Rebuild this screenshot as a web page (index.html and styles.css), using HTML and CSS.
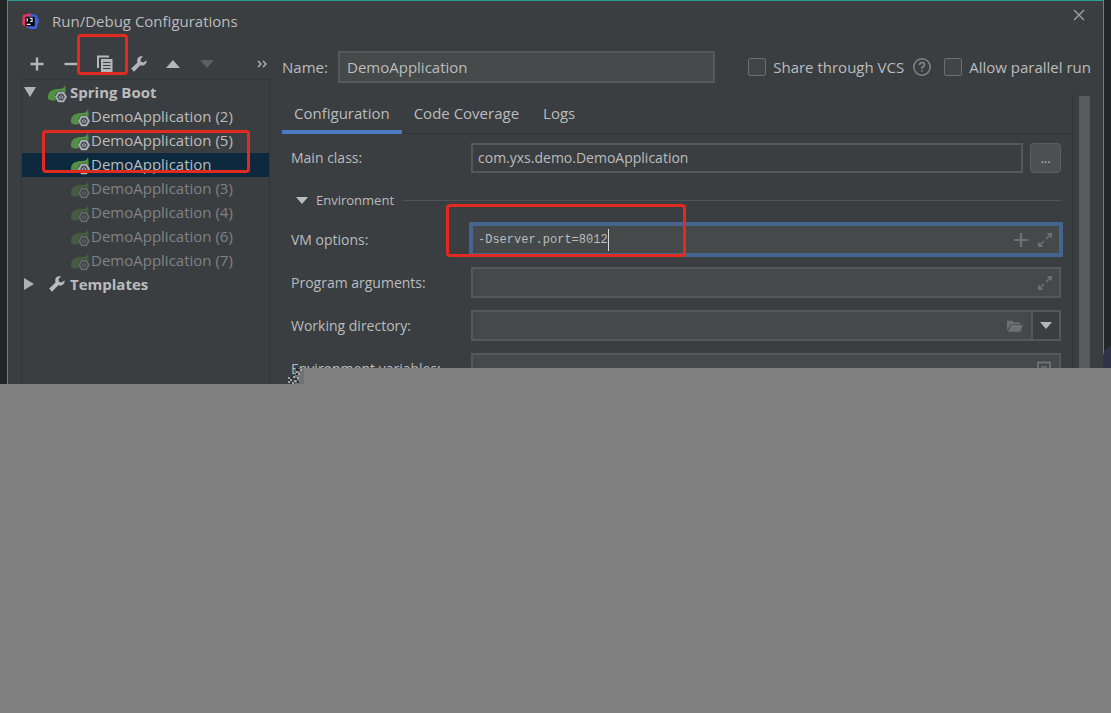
FILE: index.html
```html
<!DOCTYPE html>
<html lang="en">
<head>
<meta charset="utf-8">
<title>Run/Debug Configurations</title>
<link rel="stylesheet" href="styles.css">
</head>
<body>
<svg class="defs" aria-hidden="true">
  <symbol id="spring" viewBox="0 0 20 18">
    <path d="M0 12C0 6 5 4 10 4C14 4 16 3 17 0C18 5 18 9 16 11L10 14C7 16 4 16 0 14Z" fill="#529144"/>
    <circle cx="13" cy="12" r="6" fill="#3b3e40"/>
    <path d="M10.7 7.7H15.3L17.9 12L15.3 16.3H10.7L8.1 12Z" fill="none" stroke="#a9b2b8" stroke-width="2" stroke-linejoin="round"/>
    <path d="M13 9.5v2.5M11.3 10.8v2.4h3.4v-2.4" fill="none" stroke="#a9b2b8"/>
  </symbol>
  <symbol id="wrench" viewBox="0 0 18 18">
    <path d="M16.5 5.2L13.6 7.4L10.9 6.8L10.5 4.1L13 1.6C10.3.6 7.5 2.2 7.2 5C7.1 6 7.2 6.7 7.5 7.5L1.2 13.6L4 16.7L10.3 10.3C13.7 11.4 17.2 8.9 16.5 5.2Z" fill="currentColor"/>
  </symbol>
  <symbol id="down" viewBox="0 0 14 8"><path d="M0 0H14L7 8Z" fill="currentColor"/></symbol>
  <symbol id="expand" viewBox="0 0 16 16">
    <path d="M9.5 1H15V6.5ZM1 9.5V15H6.5Z" fill="currentColor"/>
    <path d="M12.5 3.5L9 7M7 9L3.5 12.5" stroke="currentColor" stroke-width="1.5"/>
  </symbol>
</svg>

<main class="stage">
  <section class="dialog" aria-label="Run/Debug Configurations">
    <header class="titlebar">
      <svg class="logo" viewBox="0 0 18 18" aria-hidden="true">
        <path d="M1 2L9 0L10 10L6 16L0 12Z" fill="#e8345c"/>
        <path d="M9 1L15 2L18 8L15 17L8 17L5 14Z" fill="#3f62e0"/>
        <path d="M3.5 4H13.5V14H3.5Z" fill="#0a0a12"/>
        <path d="M5.5 5.5v3.5M8 5.5h2.6v3.5h-2M5 12h4" stroke="#fff" fill="none" stroke-width="1.2"/>
      </svg>
      <h1>Run/Debug Configurations</h1>
      <button class="close" aria-label="Close"><svg viewBox="0 0 12 12"><path d="M1 1L11 11M11 1L1 11" stroke="currentColor" stroke-width="1.3"/></svg></button>
    </header>

    <div class="columns">
      <aside class="sidebar">
        <div class="toolbar">
          <button aria-label="Add"><svg viewBox="0 0 18 18"><path d="M9 2.5V15.5M2.5 9H15.5" stroke="currentColor" stroke-width="2.4"/></svg></button>
          <button aria-label="Remove"><svg viewBox="0 0 18 18"><path d="M2.5 9H15.5" stroke="currentColor" stroke-width="2.4"/></svg></button>
          <button aria-label="Copy"><svg viewBox="0 0 18 18"><path d="M2 13V1.5H13" fill="none" stroke="currentColor" stroke-width="2"/><path d="M5 4H16.5V17H5Z" fill="currentColor"/><path d="M7 7.5H14.5M7 10.5H14.5M7 13.5H14.5" stroke="#3b3e40" stroke-width="1.2"/></svg></button>
          <button aria-label="Edit templates"><svg viewBox="0 0 18 18"><use href="#wrench"/></svg></button>
          <button aria-label="Move up"><svg viewBox="0 0 18 18"><path d="M2 13L9 5L16 13Z" fill="currentColor"/></svg></button>
          <button aria-label="Move down" disabled><svg viewBox="0 0 18 18"><path d="M2 5L16 5L9 13Z" fill="currentColor"/></svg></button>
          <button class="more" aria-label="More"><svg viewBox="0 0 12 18"><path d="M2 6L5 9L2 12M7 6L10 9L7 12" fill="none" stroke="currentColor" stroke-width="1.4"/></svg></button>
        </div>
        <ul class="tree">
          <li class="group"><svg class="arrow" viewBox="0 0 12 12"><path d="M0 1H12L6 11Z" fill="currentColor"/></svg><svg class="spring"><use href="#spring"/></svg>Spring Boot</li>
          <li><svg class="spring"><use href="#spring"/></svg>DemoApplication (2)</li>
          <li><svg class="spring"><use href="#spring"/></svg>DemoApplication (5)</li>
          <li class="selected"><svg class="spring"><use href="#spring"/></svg>DemoApplication</li>
          <li class="dim"><svg class="spring"><use href="#spring"/></svg>DemoApplication (3)</li>
          <li class="dim"><svg class="spring"><use href="#spring"/></svg>DemoApplication (4)</li>
          <li class="dim"><svg class="spring"><use href="#spring"/></svg>DemoApplication (6)</li>
          <li class="dim"><svg class="spring"><use href="#spring"/></svg>DemoApplication (7)</li>
          <li class="group"><svg class="arrow" viewBox="0 0 12 12"><path d="M0 0V12L10 6Z" fill="currentColor"/></svg><svg class="wrench"><use href="#wrench"/></svg>Templates</li>
        </ul>
      </aside>

      <div class="editor">
        <div class="namerow">
          <label for="name">Name:</label>
          <input class="field name" id="name" type="text" value="DemoApplication">
          <div class="checks">
            <input type="checkbox" id="vcs"><label for="vcs">Share through VCS</label>
            <button class="help" aria-label="Help"><svg viewBox="0 0 18 18"><circle cx="9" cy="9" r="8.2" fill="none" stroke="currentColor" stroke-width="1.4"/><path d="M6.5 7Q6.5 4.5 9 4.5T11.5 7Q11.5 8.3 9 9.5V11M9 12.2V13.8" fill="none" stroke="currentColor" stroke-width="1.5"/></svg></button>
            <input type="checkbox" id="parallel"><label for="parallel">Allow parallel run</label>
          </div>
        </div>
        <div class="scroller">
          <div class="pane">
            <nav class="tabs" role="tablist">
              <button class="active" role="tab" aria-selected="true">Configuration</button>
              <button role="tab" aria-selected="false">Code Coverage</button>
              <button role="tab" aria-selected="false">Logs</button>
            </nav>
            <form class="form">
              <div class="row first">
                <label for="main">Main class:</label>
                <div class="mainclass">
                  <input class="field plain" id="main" type="text" value="com.yxs.demo.DemoApplication">
                  <button class="browse" type="button">...</button>
                </div>
              </div>
              <div class="section"><svg><use href="#down"/></svg><span>Environment</span></div>
              <div class="row">
                <label for="vm">VM options:</label>
                <div class="field combo focused">
                  <span class="entry"><input id="vm" type="text" size="18" value="-Dserver.port=8012"></span>
                  <button type="button" aria-label="Insert macro"><svg viewBox="0 0 16 16"><path d="M8 1V15M1 8H15" stroke="currentColor" stroke-width="2.2"/></svg></button>
                  <button type="button" aria-label="Expand VM options"><svg><use href="#expand"/></svg></button>
                </div>
              </div>
              <div class="row">
                <label for="args">Program arguments:</label>
                <div class="field combo">
                  <input id="args" type="text">
                  <button type="button" aria-label="Expand arguments"><svg><use href="#expand"/></svg></button>
                </div>
              </div>
              <div class="row">
                <label for="dir">Working directory:</label>
                <div class="field combo withmenu">
                  <input id="dir" type="text">
                  <button type="button" aria-label="Browse directory"><svg class="folder" viewBox="0 0 18 14"><path d="M0 12V1H6L8 3H15V5H4Z" fill="currentColor"/><path d="M4.5 6H18L15 13.5H1Z" fill="currentColor"/></svg></button>
                  <button class="menu" type="button" aria-label="Insert"><svg viewBox="0 0 14 8"><use href="#down"/></svg></button>
                </div>
              </div>
              <div class="row">
                <label for="env">Environment variables:</label>
                <div class="field combo">
                  <input id="env" type="text">
                  <button type="button" aria-label="Edit variables"><svg viewBox="0 0 16 16"><path d="M1 1.5H13V15H1Z" fill="none" stroke="currentColor" stroke-width="2"/><path d="M4 6H10M4 9H10" stroke="currentColor" stroke-width="1.5"/></svg></button>
                </div>
              </div>
            </form>
          </div>
          <div class="scrollbar"></div>
        </div>
      </div>
    </div>
  </section>
  <div class="mark mark-copy"></div>
  <div class="mark mark-tree"></div>
  <div class="mark mark-vm"></div>
  <div class="corner"></div>
</main>
<div class="blank">
  <svg class="noise" viewBox="0 0 16 16" aria-hidden="true">
    <path d="M7 0H16V16H7Z" fill="#707274"/>
    <path d="M0 9h2v2H0zM2 11h2v2H2zM5 8h2v2H5zM0 13h2v2H0zM6 12h2v2H6zM9 9h2v2H9zM8 3h2v2H8zM10 5h2v2h-2zM12 1h2v2h-2zM4 14h2v2H4z" fill="#a5a5a5"/>
    <path d="M2 9h2v2H2zM0 11h2v2H0zM7 10h2v2H7zM8 0h2v3H8zM8 5h2v2H8zM9 13h2v2H9zM10 1h2v2h-2z" fill="#2d2e2f"/>
  </svg>
</div>
</body>
</html>
```

FILE: styles.css
```css
* { box-sizing: border-box; }

body {
  margin: 0;
  min-height: 100vh;
  display: flex;
  flex-direction: column;
  background: #808080;
  color: #babcbe;
  font: 15px/24px "Open Sans", "Noto Sans", sans-serif;
}

button, input { font: inherit; color: inherit; margin: 0; padding: 0; }
button { border: 0; background: none; display: flex; align-items: center; justify-content: center; }
input:focus { outline: none; }
label { white-space: nowrap; }
.defs { position: absolute; width: 0; height: 0; }

.stage {
  position: relative;
  padding: 0 7px;
  background: #242527;
  overflow: hidden;
}

.dialog {
  border: 1px solid #2a9d94;
  border-bottom: 0;
  background: #3b3e40;
}

.titlebar {
  display: flex;
  align-items: center;
  height: 40px;
  padding: 0 18px 0 14px;
}
.titlebar h1 { margin: 0 auto 0 13px; font-size: 15px; font-weight: 400; }
.logo { width: 17px; height: 17px; }
.close { width: 12px; height: 12px; margin-bottom: 12px; color: #a0a3a5; }
.close svg { width: 12px; height: 12px; }

.columns { display: flex; }

.sidebar {
  display: flex;
  flex-direction: column;
  width: 249px;
  margin: 0 12px 0 13px;
}
.toolbar { display: flex; align-items: center; gap: 16px; height: 38px; padding: 8px 0 0 7px; }
.toolbar button { width: 18px; height: 18px; color: #b4b7b9; }
.toolbar svg { width: 18px; height: 18px; }
.toolbar button:disabled { color: #5d6062; }
.toolbar .more { margin-left: auto; width: 16px; }

.tree {
  flex: 1;
  margin: 0;
  padding: 1px 0 0;
  list-style: none;
  border: 1px solid #333638;
  border-bottom: 0;
}
.tree li { display: flex; align-items: center; height: 24px; padding: 0 0 2px 49px; }
.tree .group { padding-left: 2px; font-weight: 700; }
.tree .arrow { width: 12px; height: 12px; margin-right: 12px; color: #afb1b3; }
.tree .spring { width: 20px; height: 18px; margin-top: 4px; flex: none; }
.tree .wrench { width: 18px; height: 18px; margin-right: 4px; }
.tree .group .spring { margin-right: 2px; }
.tree .selected { background: #0d293e; }
.tree .dim { color: #808284; }
.tree .dim .spring { opacity: 0.35; }

.editor { flex: 1; min-width: 0; }

.namerow { display: flex; align-items: center; height: 52px; padding-right: 12px; }
.namerow > label { width: 56px; }

.field { border: 2px solid #55585a; background: #45494a; min-width: 0; }
.name { flex: 0 1 377px; height: 32px; padding: 0 7px; }
.checks { display: flex; align-items: center; gap: 7px; margin-left: auto; }
.checks input { appearance: none; width: 18px; height: 18px; border: 1px solid #6b6e70; border-radius: 2px; background: #414547; }
.help { width: 18px; height: 18px; margin: 0 6px 0 2px; color: #86898b; }
.help svg { width: 18px; height: 18px; }

.scroller { display: flex; padding-right: 13px; }
.pane { flex: 1; min-width: 0; border-right: 1px solid #323537; }
.scrollbar { width: 11px; margin: 3px 0 0 6px; background: #585b5d; }

.tabs { display: flex; height: 41px; border-bottom: 1px solid #323537; }
.tabs button { padding: 2px 12px 0; height: 41px; border-bottom: 4px solid transparent; }
.tabs .active { border-bottom-color: #4a7bc2; }

.form { display: grid; gap: 12px; padding: 9px 11px 0 9px; font-size: 14px; }
.row { display: grid; grid-template-columns: 180px 1fr; align-items: center; height: 31px; }
.row .field { height: 31px; }
.first, .first .field { height: 30px; }

.mainclass { display: flex; gap: 7px; }
.mainclass .plain { flex: 1; padding: 0 5px 2px; background: #3b3e40; }
.browse { width: 31px; height: 30px; border: 1px solid #5c5f61; border-radius: 4px; background: #4c5052; font-size: 13px; }

.section { display: flex; align-items: center; height: 27px; padding-top: 3px; font-size: 13px; }
.section svg { width: 12px; height: 7px; margin: 0 8px 0 5px; }
.section::after { content: ""; flex: 1; height: 1px; margin-left: 9px; background: #515456; }

.combo { display: flex; align-items: center; padding-right: 6px; }
.combo input { flex: 1; min-width: 0; border: 0; background: none; height: 24px; }
.combo button { width: 16px; height: 16px; margin-left: 8px; color: #6e7173; }
.combo svg { width: 16px; height: 16px; }
.combo .folder { width: 18px; height: 14px; }
.row .focused { border: 4px solid #46658e; height: 35px; margin: -2px; }
.entry { flex: 1; display: flex; align-items: center; padding-left: 5px; }
.entry input { flex: none; width: 131px; height: 22px; border-right: 1px solid #d8d8d8; font: 12px/22px "Liberation Mono", monospace; }
.combo.withmenu { padding-right: 0; }
.withmenu .menu { width: 28px; height: 27px; border-left: 2px solid #55585a; background: #3b3e40; color: #b4b7b9; }
.withmenu .menu svg { width: 12px; height: 7px; }

.mark { position: absolute; border: 3px solid #e22b20; border-radius: 4px; pointer-events: none; }
.mark-copy { left: 77px; top: 34px; width: 51px; height: 41px; }
.mark-tree { left: 42px; top: 130px; width: 208px; height: 43px; }
.mark-vm { left: 446px; top: 204px; width: 240px; height: 53px; }
.corner { position: absolute; right: -16px; top: 345px; width: 24px; height: 40px; border-radius: 12px 0 0 0; background: #2e3347; }

.blank { position: relative; flex: 1; background: #808080; }
.blank::before { content: ""; position: absolute; left: 304px; right: 0; top: -16px; height: 16px; background: #808080; }
.noise { position: absolute; left: 288px; top: -16px; width: 16px; height: 16px; }
```
